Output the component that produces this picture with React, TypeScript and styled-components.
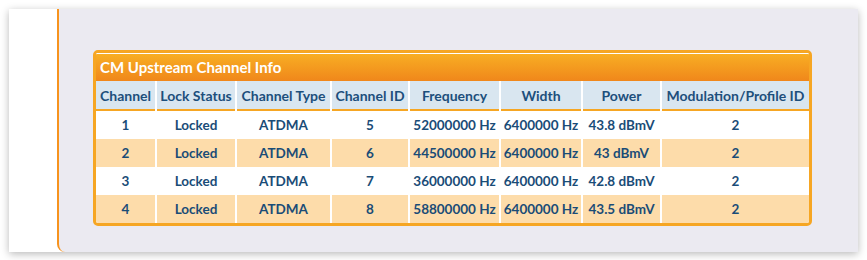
import React from "react";
import styled, { createGlobalStyle } from "styled-components";

const Global = createGlobalStyle`
  html, body { margin: 0; padding: 0; background: #ffffff; }
  body { font-family: Lato, "Open Sans", sans-serif; }
`;

const Page = styled.div`
  padding: 9px;
`;

const Panel = styled.div`
  display: flex;
  width: 849px;
  height: 243px;
  background: #ffffff;
  box-shadow: 0 2px 8px rgba(0, 0, 0, 0.28);
`;

const SideStrip = styled.div`
  width: 48px;
  background: #ffffff;
`;

const Content = styled.div`
  flex: 1;
  background: #ebeaf1;
  border-left: 2px solid #f7931e;
  border-bottom-left-radius: 8px;
  padding: 41px 0 0 34px;
`;

const Box = styled.div`
  width: 713px;
  border: 3px solid #f6a623;
  border-radius: 5px;
  background: #ffffff;
  overflow: hidden;
`;

const TitleBar = styled.div`
  height: 27px;
  border-top: 1px solid #ffffff;
  background: linear-gradient(#f8ae23, #f0871b);
  color: #ffffff;
  font-weight: 700;
  font-size: 15px;
  line-height: 27px;
  padding-left: 4px;
`;

const Table = styled.table`
  border-collapse: separate;
  border-spacing: 2px 0;
  margin: 0 -2px;
  width: 717px;
  table-layout: fixed;
`;

const HeadCell = styled.th<{ $w: number }>`
  width: ${(p) => p.$w}px;
  height: 28px;
  padding: 0;
  background: #d9e6f0;
  border-bottom: 2px solid #f6a623;
  color: #1d4f7c;
  font-size: 14px;
  font-weight: 700;
  text-align: center;
  white-space: nowrap;
`;

const Row = styled.tr<{ $alt: boolean }>`
  background: ${(p) => (p.$alt ? "#fddcaa" : "#ffffff")};
`;

const Cell = styled.td`
  height: 28px;
  padding: 0;
  color: #1a4c77;
  font-size: 13.5px;
  font-weight: 700;
  text-align: center;
  white-space: nowrap;
`;

const columns: [string, number][] = [
  ["Channel", 59],
  ["Lock Status", 78],
  ["Channel Type", 93],
  ["Channel ID", 76],
  ["Frequency", 89],
  ["Width", 80],
  ["Power", 77],
  ["Modulation/Profile ID", 147],
];

const rows = [
  ["1", "Locked", "ATDMA", "5", "52000000 Hz", "6400000 Hz", "43.8 dBmV", "2"],
  ["2", "Locked", "ATDMA", "6", "44500000 Hz", "6400000 Hz", "43 dBmV", "2"],
  ["3", "Locked", "ATDMA", "7", "36000000 Hz", "6400000 Hz", "42.8 dBmV", "2"],
  ["4", "Locked", "ATDMA", "8", "58800000 Hz", "6400000 Hz", "43.5 dBmV", "2"],
];

export default function App() {
  return (
    <Page>
      <Global />
      <Panel>
        <SideStrip />
        <Content>
          <Box>
            <TitleBar>CM Upstream Channel Info</TitleBar>
            <Table>
              <thead>
                <tr>
                  {columns.map(([label, w]) => (
                    <HeadCell key={label} $w={w}>
                      {label}
                    </HeadCell>
                  ))}
                </tr>
              </thead>
              <tbody>
                {rows.map((r, i) => (
                  <Row key={i} $alt={i % 2 === 1}>
                    {r.map((v, j) => (
                      <Cell key={j}>{v}</Cell>
                    ))}
                  </Row>
                ))}
              </tbody>
            </Table>
          </Box>
        </Content>
      </Panel>
    </Page>
  );
}
